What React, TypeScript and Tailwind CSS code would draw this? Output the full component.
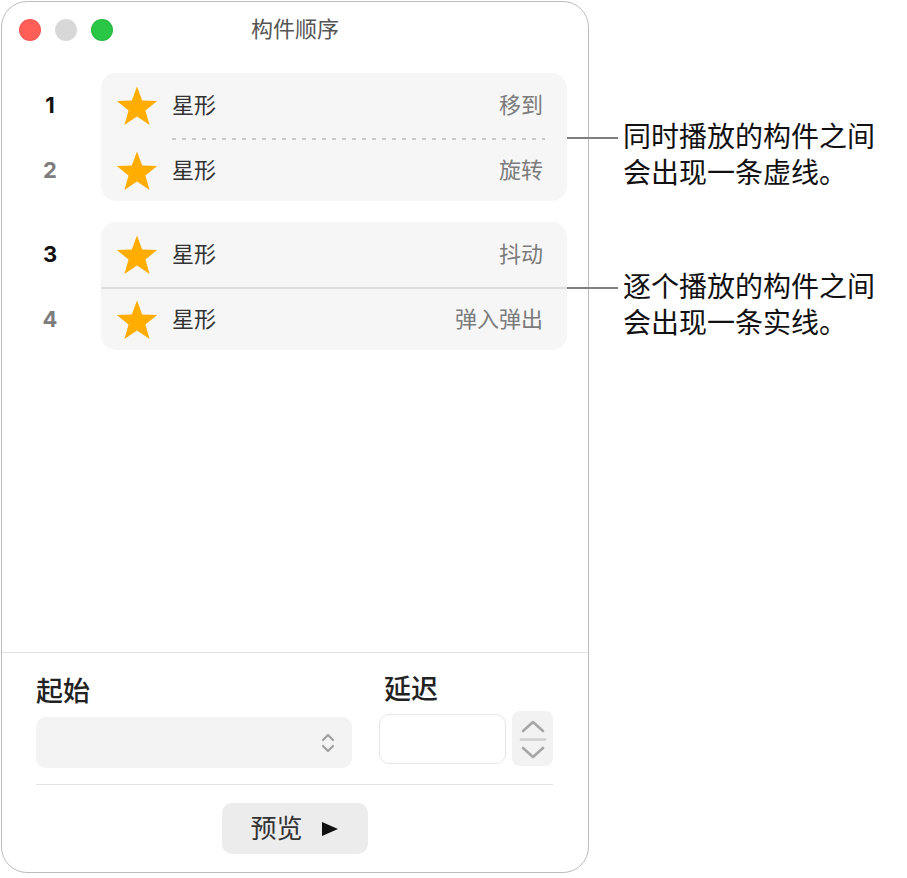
import React from "react";

const Star: React.FC = () => (
  <svg width="44" height="42" viewBox="0 0 44 42" className="shrink-0">
    <path
      d="M22 1.5 L27.2 15.6 L42.2 16.1 L30.4 25.4 L34.6 39.9 L22 31.4 L9.4 39.9 L13.6 25.4 L1.8 16.1 L16.8 15.6 Z"
      fill="#ffad00"
    />
  </svg>
);

interface RowProps {
  label: string;
  effect: string;
  tall?: boolean;
}

const Row: React.FC<RowProps> = ({ label, effect, tall }) => (
  <div className={`${tall ? "h-[65px]" : "h-[61px]"} flex items-center pl-[14px] pr-[24px]`}>
    <Star />
    <span className="ml-[13px] text-[22px] text-[#333]">{label}</span>
    <span className="ml-auto text-[22px] text-[#7b7b7b]">{effect}</span>
  </div>
);

interface GroupProps {
  first: { num: string; label: string; effect: string };
  second: { num: string; label: string; effect: string };
  dashed?: boolean;
}

const Group: React.FC<GroupProps> = ({ first, second, dashed }) => (
  <div className="flex">
    <div className="w-[96px] flex flex-col">
      <div className="h-[65px] flex items-center justify-center text-[22px] font-bold text-[#111]">
        {first.num}
      </div>
      <div className="h-[2px]" />
      <div className="h-[61px] flex items-center justify-center text-[22px] font-bold text-[#7d7d7d]">
        {second.num}
      </div>
    </div>
    <div className="ml-[3px] mr-[21px] flex-1 rounded-[15px] bg-[#f6f6f6] flex flex-col">
      <Row label={first.label} effect={first.effect} tall />
      {dashed ? (
        <div className="h-[2px] ml-[71px] mr-[22px] bg-[image:repeating-linear-gradient(to_right,#c9c9c9_0_4px,transparent_4px_10px)]" />
      ) : (
        <div className="h-[2px] bg-[#dddddd]" />
      )}
      <Row label={second.label} effect={second.effect} />
    </div>
  </div>
);

const Callout: React.FC<{ top: number; lines: string[] }> = ({ top, lines }) => (
  <div className="absolute left-[567px] flex items-start" style={{ top }}>
    <div className="w-[51px] h-[2px] mt-[18px] bg-[#808080]" />
    <div className="ml-[5px] text-[28px] leading-[36px] text-[#111]">
      {lines.map((l) => (
        <div key={l}>{l}</div>
      ))}
    </div>
  </div>
);

const App: React.FC = () => {
  return (
    <div className="relative w-[907px] h-[878px] bg-white pl-[1px] pt-[1px] font-['Inter','Noto_Sans_CJK_SC',sans-serif]">
      <div className="w-[588px] h-[872px] rounded-[26px] border border-[#bcbcbc] bg-white flex flex-col overflow-hidden">
        {/* title bar */}
        <div className="relative h-[55px] flex items-center pl-[17px] shrink-0">
          <div className="flex gap-[14px]">
            <div className="w-[22px] h-[22px] rounded-full bg-[#ff5f57] border border-[#e5484d]/40" />
            <div className="w-[22px] h-[22px] rounded-full bg-[#d8d8d8]" />
            <div className="w-[22px] h-[22px] rounded-full bg-[#2ac645] border border-[#1ea83a]/40" />
          </div>
          <div className="absolute inset-0 flex items-center justify-center text-[22px] text-[#555] pointer-events-none">
            构件顺序
          </div>
        </div>

        <div className="mt-[16px] flex flex-col gap-[21px]">
          <Group
            first={{ num: "1", label: "星形", effect: "移到" }}
            second={{ num: "2", label: "星形", effect: "旋转" }}
            dashed
          />
          <Group
            first={{ num: "3", label: "星形", effect: "抖动" }}
            second={{ num: "4", label: "星形", effect: "弹入弹出" }}
          />
        </div>

        <div className="flex-1" />

        {/* bottom panel */}
        <div className="h-[1px] bg-[#e2e2e2] shrink-0" />
        <div className="pl-[34px] pr-[35px] pt-[22px] pb-[18px] flex flex-col shrink-0">
          <div className="flex">
            <div className="w-[316px] flex flex-col">
              <div className="h-[34px] leading-[34px] text-[27px] font-medium text-[#222]">起始</div>
              <div className="mt-[8px] h-[51px] rounded-[10px] bg-[#f3f3f3] flex items-center justify-end pr-[17px]">
                <svg width="14" height="22" viewBox="0 0 14 22" fill="none" stroke="#a0a0a0" strokeWidth="2.2" strokeLinecap="round" strokeLinejoin="round">
                  <path d="M2 8 L7 3 L12 8" />
                  <path d="M2 14 L7 19 L12 14" />
                </svg>
              </div>
            </div>
            <div className="ml-[27px] flex flex-col">
              <div className="h-[34px] leading-[34px] text-[27px] font-medium text-[#222] pl-[5px] -mt-[2px]">延迟</div>
              <div className="mt-[4px] flex items-center gap-[6px]">
                <div className="w-[127px] h-[50px] rounded-[10px] border border-[#e6e6e6] bg-white" />
                <div className="w-[41px] h-[55px] rounded-[8px] bg-[#f2f2f2] flex flex-col items-center justify-center">
                  <svg width="30" height="50" viewBox="0 0 30 50" fill="none" stroke="#a6a6a6" strokeWidth="2.6" strokeLinecap="round" strokeLinejoin="round">
                    <path d="M5 17 L15 8 L25 17" />
                    <path d="M3 25.5 L27 25.5" stroke="#d0d0d0" />
                    <path d="M5 34 L15 43 L25 34" />
                  </svg>
                </div>
              </div>
            </div>
          </div>
          <div className="mt-[16px] h-[1px] bg-[#e3e3e3]" />
          <div className="mt-[18px] flex justify-center">
            <div className="w-[146px] h-[51px] rounded-[10px] bg-[#ececec] flex items-center justify-center gap-[18px] text-[26px] text-[#333]">
              <span>预览</span>
              <svg width="18" height="16" viewBox="0 0 18 16">
                <path d="M1 1 L17 8 L1 15 Z" fill="#111" />
              </svg>
            </div>
          </div>
        </div>
      </div>

      <Callout top={119} lines={["同时播放的构件之间", "会出现一条虚线。"]} />
      <Callout top={269} lines={["逐个播放的构件之间", "会出现一条实线。"]} />
    </div>
  );
};

export default App;
